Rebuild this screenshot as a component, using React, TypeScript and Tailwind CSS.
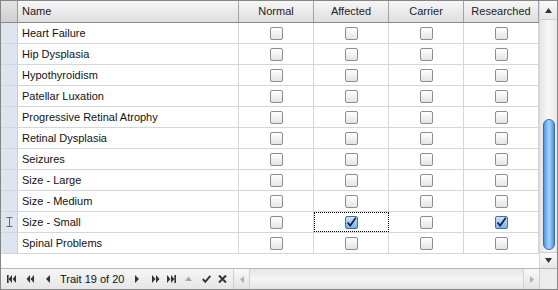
import React from "react";

const traits = [
  "Heart Failure",
  "Hip Dysplasia",
  "Hypothyroidism",
  "Patellar Luxation",
  "Progressive Retinal Atrophy",
  "Retinal Dysplasia",
  "Seizures",
  "Size - Large",
  "Size - Medium",
  "Size - Small",
  "Spinal Problems",
];

// checked cells: [normal, affected, carrier, researched]
const values: Record<number, boolean[]> = {
  9: [false, true, false, true],
};

function CheckBox({ checked }: { checked: boolean }) {
  if (checked) {
    return (
      <div className="w-[13px] h-[13px] rounded-[2px] border border-[#3f6fa8] bg-gradient-to-b from-[#cfe3fa] to-[#7eb0ea] flex items-center justify-center">
        <svg width="11" height="11" viewBox="0 0 11 11">
          <path d="M1.5 5.5 L4.2 8.5 L9.8 0.8" stroke="#14243f" strokeWidth="1.8" fill="none" />
        </svg>
      </div>
    );
  }
  return (
    <div className="w-[13px] h-[13px] rounded-[2px] border border-[#8d8d8d] bg-gradient-to-b from-[#ffffff] to-[#e4e4e4]" />
  );
}

const Ico = ({ children, w = 10 }: { children: React.ReactNode; w?: number }) => (
  <svg width={w} height="8" viewBox={`0 0 ${w} 8`} className="shrink-0">
    {children}
  </svg>
);

export default function App() {
  return (
    <div
      className="w-[558px] h-[290px] border border-[#858585] bg-white flex flex-col text-[11px] text-[#111]"
      style={{ fontFamily: '"Liberation Sans", Arial, sans-serif' }}
    >
      {/* table + vertical scroll */}
      <div className="flex h-[267px]">
        <div className="w-[538px] flex flex-col">
          {/* header */}
          <div className="grid grid-cols-[17px_221px_75px_75px_75px_75px] h-[22px] border-b border-[#8a8a8a]">
            <div className="border-r border-[#9a9a9a] bg-gradient-to-b from-[#e4e4e4] to-[#cfcfcf]" />
            <div className="border-r border-[#a3a3a3] bg-gradient-to-b from-[#f6f6f6] to-[#dfdfdf] flex items-center pl-[4px] text-[#222]">
              Name
            </div>
            {["Normal", "Affected", "Carrier", "Researched"].map((h) => (
              <div
                key={h}
                className="border-r border-[#a3a3a3] bg-gradient-to-b from-[#f6f6f6] to-[#dfdfdf] flex items-center justify-center text-[#222]"
              >
                {h}
              </div>
            ))}
          </div>
          {/* rows */}
          {traits.map((t, i) => {
            const v = values[i] ?? [false, false, false, false];
            return (
              <div
                key={t}
                className="grid grid-cols-[17px_221px_75px_75px_75px_75px] h-[21px] border-b border-[#d6d6d6]"
              >
                <div className="bg-[#dde5f1] border-r border-[#c9ced8] flex items-center justify-center">
                  {i === 9 && (
                    <svg width="7" height="10" viewBox="0 0 7 10">
                      <path d="M0.5 0.5 H6.5 M3.5 0.5 V9.5 M0.5 9.5 H6.5" stroke="#6b6b6b" strokeWidth="1" fill="none" />
                    </svg>
                  )}
                </div>
                <div className="border-r border-[#d6d6d6] flex items-center pl-[4px]">{t}</div>
                {v.map((c, j) => (
                  <div
                    key={j}
                    className={
                      i === 9 && j === 1
                        ? "border border-dotted border-black flex items-center justify-center"
                        : "border-r border-[#d6d6d6] flex items-center justify-center"
                    }
                  >
                    <CheckBox checked={c} />
                  </div>
                ))}
              </div>
            );
          })}
          <div className="flex-1" />
        </div>
        {/* vertical scrollbar */}
        <div className="w-[18px] flex flex-col border-l border-[#d9d9d9] bg-gradient-to-r from-[#e6e6e6] via-[#f7f7f7] to-[#e9e9e9]">
          <div className="h-[19px] flex items-center justify-center border-b border-[#d0d0d0] bg-gradient-to-b from-[#fafafa] to-[#e7e7e7]">
            <svg width="7" height="5" viewBox="0 0 7 5">
              <polygon points="3.5,0 7,5 0,5" fill="#333" />
            </svg>
          </div>
          <div className="flex-1 flex flex-col justify-end items-center pb-[2px]">
            <div className="w-[12px] h-[131px] rounded-[6px] border border-[#2f6fb8] bg-gradient-to-r from-[#4d96e4] via-[#a9d2f8] to-[#4a92e0]" />
          </div>
          <div className="h-[16px] flex items-center justify-center border-t border-[#d0d0d0] bg-gradient-to-b from-[#fafafa] to-[#e7e7e7]">
            <svg width="7" height="5" viewBox="0 0 7 5">
              <polygon points="0,0 7,0 3.5,5" fill="#333" />
            </svg>
          </div>
        </div>
      </div>

      {/* bottom navigator bar */}
      <div className="flex flex-1 border-t border-[#b8b8b8] bg-gradient-to-b from-[#f6f6f6] to-[#e6e6e6]">
        <div className="w-[232px] flex items-center pl-[6px]">
          <Ico w={9}>
            <rect x="0" y="0" width="1.6" height="8" fill="#333" />
            <polygon points="5,0 1.6,4 5,8" fill="#333" />
            <polygon points="9,0 5.6,4 9,8" fill="#333" />
          </Ico>
          <div className="w-[10px]" />
          <Ico w={8}>
            <polygon points="4,0 0.5,4 4,8" fill="#333" />
            <polygon points="8,0 4.5,4 8,8" fill="#333" />
          </Ico>
          <div className="w-[11px]" />
          <Ico w={5}>
            <polygon points="5,0 1,4 5,8" fill="#333" />
          </Ico>
          <span className="ml-[10px] text-[11px] text-[#111]">Trait 19 of 20</span>
          <div className="w-[11px]" />
          <Ico w={5}>
            <polygon points="0,0 4,4 0,8" fill="#333" />
          </Ico>
          <div className="w-[12px]" />
          <Ico w={8}>
            <polygon points="0,0 3.5,4 0,8" fill="#333" />
            <polygon points="4,0 7.5,4 4,8" fill="#333" />
          </Ico>
          <div className="w-[7px]" />
          <Ico w={9}>
            <polygon points="0,0 3.4,4 0,8" fill="#333" />
            <polygon points="4,0 7.4,4 4,8" fill="#333" />
            <rect x="7.4" y="0" width="1.6" height="8" fill="#333" />
          </Ico>
          <div className="w-[9px]" />
          <Ico w={7}>
            <polygon points="3.5,1.5 7,6 0,6" fill="#a8a8a8" />
          </Ico>
          <div className="w-[10px]" />
          <Ico w={9}>
            <path d="M0.8 4 L3.3 6.8 L8.3 0.8" stroke="#333" strokeWidth="1.9" fill="none" />
          </Ico>
          <div className="w-[7px]" />
          <Ico w={9}>
            <path d="M1 0.5 L8 7.5 M8 0.5 L1 7.5" stroke="#333" strokeWidth="2" fill="none" />
          </Ico>
        </div>
        {/* horizontal scrollbar */}
        <div className="w-[306px] flex bg-gradient-to-b from-[#e5e5e5] via-[#f5f5f5] to-[#e5e5e5] border-l border-[#cfcfcf]">
          <div className="w-[16px] flex items-center justify-center border-r border-[#d3d3d3] bg-gradient-to-b from-[#f8f8f8] to-[#e4e4e4]">
            <svg width="4" height="7" viewBox="0 0 4 7">
              <polygon points="4,0 0,3.5 4,7" fill="#b0b0b0" />
            </svg>
          </div>
          <div className="flex-1" />
          <div className="w-[16px] flex items-center justify-center border-l border-[#d3d3d3] bg-gradient-to-b from-[#f8f8f8] to-[#e4e4e4]">
            <svg width="4" height="7" viewBox="0 0 4 7">
              <polygon points="0,0 4,3.5 0,7" fill="#b0b0b0" />
            </svg>
          </div>
        </div>
        <div className="w-[18px] bg-[#ececec] border-l border-[#cfcfcf]" />
      </div>
    </div>
  );
}
